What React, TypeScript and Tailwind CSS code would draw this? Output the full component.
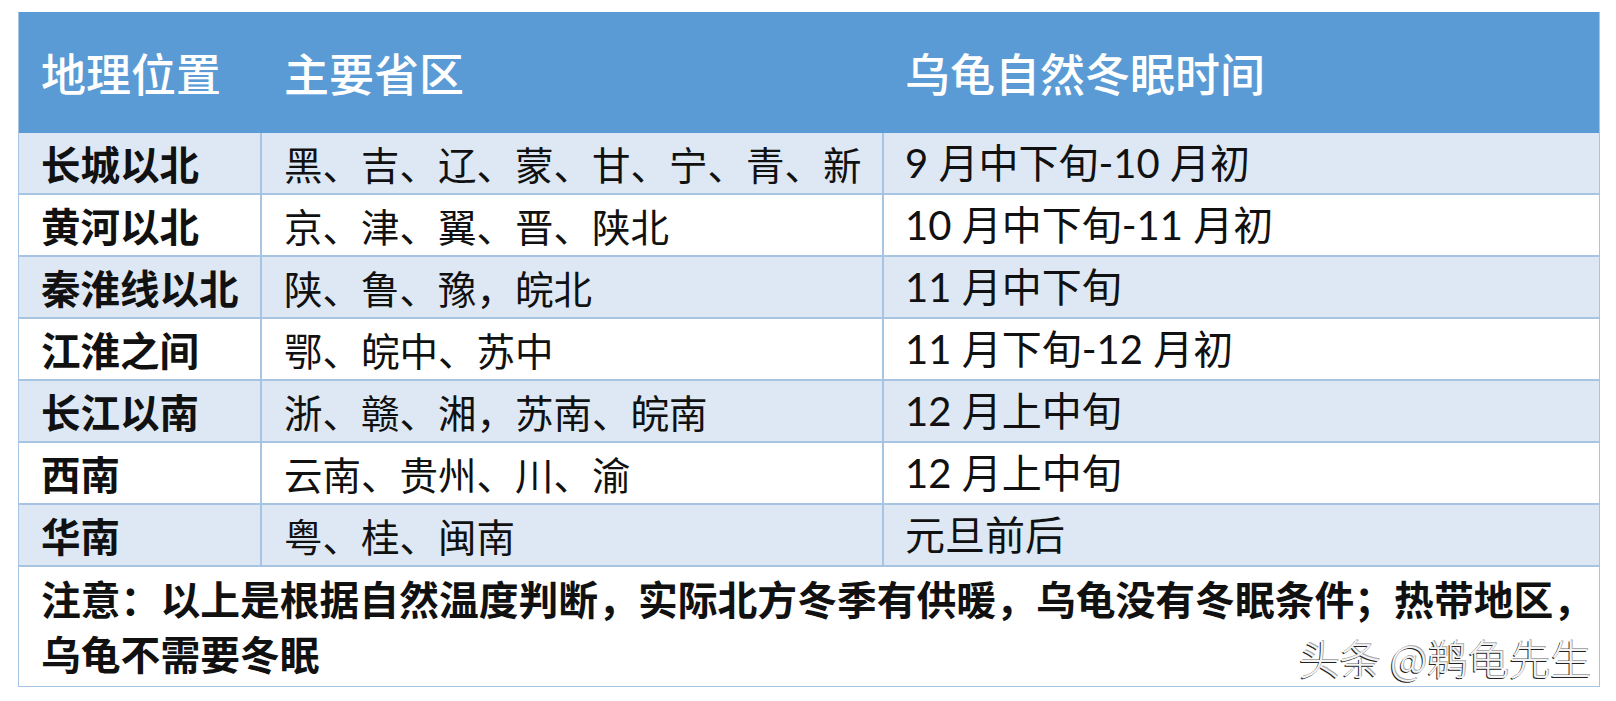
const CJK = "font-['Noto_Sans_CJK_SC',sans-serif]";
const MIX = "font-['Lato','Noto_Sans_CJK_SC',sans-serif]";

const rows = [
  { place: "长城以北", provinces: "黑、吉、辽、蒙、甘、宁、青、新", time: "9 月中下旬-10 月初" },
  { place: "黄河以北", provinces: "京、津、翼、晋、陕北", time: "10 月中下旬-11 月初" },
  { place: "秦淮线以北", provinces: "陕、鲁、豫，皖北", time: "11 月中下旬" },
  { place: "江淮之间", provinces: "鄂、皖中、苏中", time: "11 月下旬-12 月初" },
  { place: "长江以南", provinces: "浙、赣、湘，苏南、皖南", time: "12 月上中旬" },
  { place: "西南", provinces: "云南、贵州、川、渝", time: "12 月上中旬" },
  { place: "华南", provinces: "粤、桂、闽南", time: "元旦前后" },
];

export default function App() {
  return (
    <div className="w-[1616px] h-[701px] bg-white pt-[12px] pl-[18px]">
      <div className="w-[1582px] border-x border-b border-[#a7c4e2]">
        {/* header */}
        <div className={`grid grid-cols-[243px_622px_1fr] h-[121px] items-center bg-[#5b9bd5] text-white text-[45px] font-medium leading-none ${CJK}`}>
          <div className="pl-[22px]">地理位置</div>
          <div className="pl-[22px]">主要省区</div>
          <div className="pl-[21px]">乌龟自然冬眠时间</div>
        </div>

        {rows.map((r, i) => (
          <div
            key={r.place}
            className={`grid grid-cols-[243px_622px_1fr] h-[62px] border-b-2 border-[#a7c4e2] leading-none text-[#111] ${
              i % 2 === 0 ? "bg-[#dde8f4]" : "bg-white"
            }`}
          >
            <div className={`flex items-center pl-[22px] text-[39.5px] font-bold border-r-2 border-[#a7c4e2] whitespace-nowrap ${CJK}`}>{r.place}</div>
            <div className={`flex items-center pl-[22px] text-[38.5px] border-r-2 border-[#a7c4e2] whitespace-nowrap ${CJK}`}>{r.provinces}</div>
            <div className={`flex items-center pl-[21px] text-[40px] whitespace-nowrap ${MIX}`}>{r.time}</div>
          </div>
        ))}

        {/* note */}
        <div className={`relative h-[119px] pt-[3px] pl-[22px] text-[39.8px] leading-[55px] font-bold text-[#111] ${CJK}`}>
          <div className="whitespace-nowrap">注意：以上是根据自然温度判断，实际北方冬季有供暖，乌龟没有冬眠条件；热带地区，</div>
          <div>乌龟不需要冬眠</div>
          <span className="absolute right-[8px] bottom-[8px] text-[41px] leading-none font-light text-[#f4f4f4] [text-shadow:-1px_1px_0_#222,1px_-1px_0_#aaa]">
            头条 @鹈龟先生
          </span>
        </div>
      </div>
    </div>
  );
}
